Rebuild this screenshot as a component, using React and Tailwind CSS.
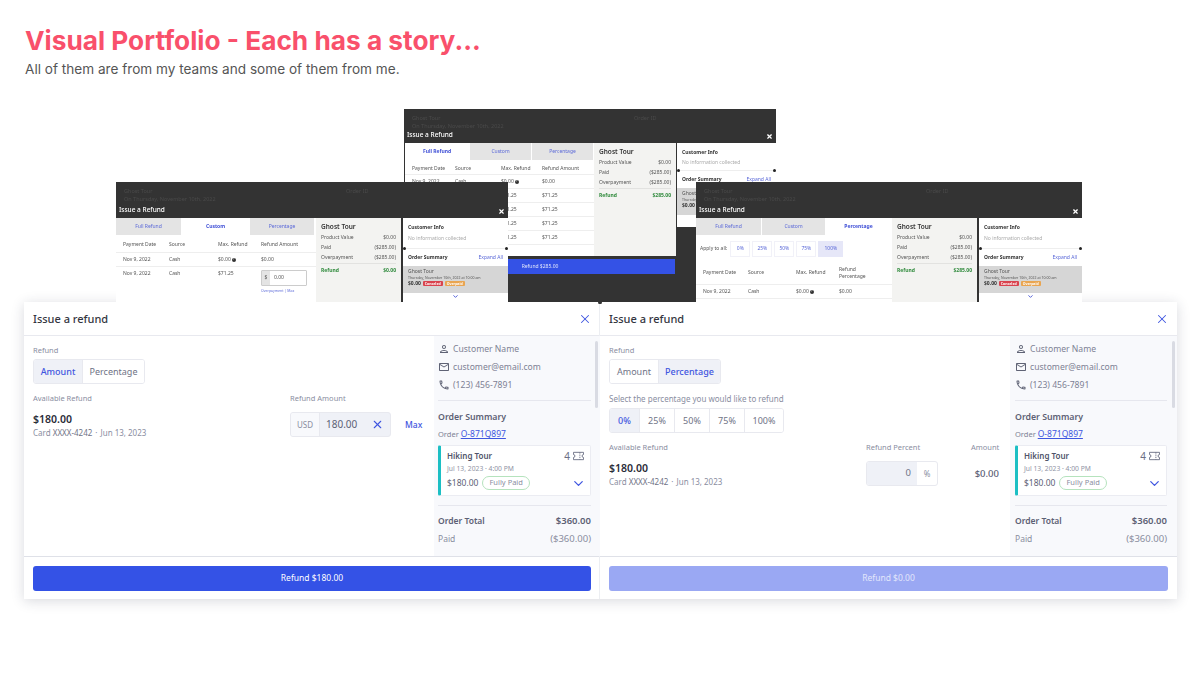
import { X, ChevronDown } from 'lucide-react';
import { MdOutlinePerson, MdOutlineMailOutline, MdOutlineCall } from 'react-icons/md';

function TicketIcon() {
  return (
    <svg width="11" height="10" viewBox="0 0 12 10" fill="none" stroke="#6b7084" strokeWidth="1">
      <path d="M.5 1h11v2.4a1.6 1.6 0 0 0 0 3.2V9H.5V6.6a1.6 1.6 0 0 0 0-3.2z" />
      <path d="M7.5 1v8" strokeDasharray="1.4 1" />
    </svg>
  );
}

function SidePanel({ wide }) {
  return (
    <div className={`relative h-full bg-[#f8f9fc] pt-[6px] text-[#6f7386] overflow-hidden ${wide ? 'w-[167px] pl-[5px] pr-[10px]' : 'w-[166px] pl-1 pr-[9px]'}`}>
      <div className="absolute right-[2px] top-[5px] w-[3px] h-[67px] rounded bg-[#d9dbe3]" />
      <div className="flex flex-col gap-[4px] text-[8.6px] leading-[14px] text-[#7d8194]">
        <div className="flex items-center gap-[3px]"><MdOutlinePerson size={12} color="#5f6375" />Customer Name</div>
        <div className="flex items-center gap-[3px]"><MdOutlineMailOutline size={12} color="#5f6375" />customer@email.com</div>
        <div className="flex items-center gap-[3px]"><MdOutlineCall size={12} color="#5f6375" />(123) 456-7891</div>
      </div>
      <div className="mt-[8px] border-t border-[#e6e7ee]" />
      <div className="mt-[9px] text-[8.75px] leading-[14px] font-semibold text-[#5d6175]">Order Summary</div>
      <div className="mt-[4px] text-[7.5px] leading-[12px] text-[#7d8194]">
        Order <span className="text-[#3f56e0] underline text-[8.5px]">O-871Q897</span>
      </div>
      <div className="mt-[5px] h-[51px] rounded-[2px] bg-white border border-[#ebecf2] border-l-[3px] border-l-[#1cbfc4] pl-[6px] pr-[6px] pt-[3px]">
        <div className="flex justify-between items-center text-[8px] leading-[14px] font-semibold text-[#50546a]">
          Hiking Tour
          <span className="flex items-center gap-[3px] text-[10px] font-normal text-[#6b7084]">4 <TicketIcon /></span>
        </div>
        <div className="text-[6.75px] leading-[12px] text-[#9094a5]">Jul 13, 2023 · 4:00 PM</div>
        <div className="mt-[1px] flex items-center text-[8.5px] text-[#5d6175]">
          $180.00
          <span className="ml-[4px] px-[6px] h-[14px] flex items-center rounded-full border border-[#b5e3bd] text-[7.5px] text-[#8a8e9f]">Fully Paid</span>
          <ChevronDown size={15} strokeWidth={2} color="#3f56e0" className="ml-auto -mr-[2px] -my-[1px]" />
        </div>
      </div>
      <div className="mt-[9px] border-t border-[#e6e7ee]" />
      <div className="mt-[8px] flex justify-between items-center text-[9.5px] leading-[14px] font-semibold text-[#5d6175]">
        <span className="text-[8.5px]">Order Total</span><span>$360.00</span>
      </div>
      <div className="mt-[4px] flex justify-between items-center text-[9.5px] leading-[14px] text-[#8a8e9f]">
        <span className="text-[8.5px]">Paid</span><span>($360.00)</span>
      </div>
    </div>
  );
}

function Segmented({ items, active, widths }) {
  return (
    <div className="flex h-[25px] w-fit rounded-[3px] border border-[#e8e9ef] overflow-hidden text-[9px]">
      {items.map((t, i) => (
        <div
          key={t}
          style={{ width: widths[i] }}
          className={`flex items-center justify-center ${i > 0 ? 'border-l border-[#e8e9ef]' : ''} ${t === active ? 'bg-[#eff1f7] text-[#3f56e0] font-medium' : 'bg-white text-[#6f7386]'}`}
        >
          {t}
        </div>
      ))}
    </div>
  );
}

function Available() {
  return (
    <div>
      <div className="text-[7.5px] leading-[12px] text-[#8a8e9f]">Available Refund</div>
      <div className="mt-[8px] text-[10.5px] leading-[14px] font-semibold text-[#2a2c38]">$180.00</div>
      <div className="mt-[1px] text-[8px] leading-[12px] text-[#8a8e9f]">
        Card <span className="text-[#6f7386]">XXXX-4242</span><span className="mx-[3px]">·</span>Jun 13, 2023
      </div>
    </div>
  );
}

function AmountBody() {
  return (
    <div className="flex justify-between">
      <Available />
      <div className="flex">
        <div className="w-[115px]">
          <div className="text-[7.5px] leading-[12px] text-[#8a8e9f]">Refund Amount</div>
          <div className="mt-[8px] flex items-center w-[101px] h-[25px] rounded-[3px] border border-[#e8e9ef] bg-[#eff1f7] overflow-hidden">
            <div className="w-[29px] h-full bg-[#f8f9fc] border-r border-[#e8e9ef] flex items-center justify-center text-[8px] text-[#8a8e9f]">USD</div>
            <div className="pl-[6px] text-[10px] text-[#5d6175]">180.00</div>
            <X size={13} strokeWidth={2} color="#3f56e0" className="ml-auto mr-[6px]" />
          </div>
        </div>
        <div className="w-[29px] pt-[27px] pr-[13px] text-[8.5px] font-medium text-[#3f56e0] text-right leading-[12px]">Max</div>
      </div>
    </div>
  );
}

function PercentBody() {
  return (
    <div>
      <div className="mb-[3px] text-[8px] leading-[12px] text-[#8a8e9f]">Select the percentage you would like to refund</div>
      <Segmented items={['0%', '25%', '50%', '75%', '100%']} active="0%" widths={[29, 35, 35, 35, 39]} />
      <div className="mt-[8px] flex justify-between pr-[11px]">
        <Available />
        <div className="flex gap-[33px]">
          <div>
            <div className="text-[7.5px] leading-[12px] text-[#8a8e9f]">Refund Percent</div>
            <div className="mt-[8px] flex w-[72px] h-[25px] rounded-[3px] border border-[#e8e9ef] overflow-hidden">
              <div className="w-[50px] bg-[#eff1f7] flex items-center justify-end pr-[6px] text-[9.5px] text-[#6f7386]">0</div>
              <div className="flex-1 flex items-center justify-center text-[8px] text-[#8a8e9f]">%</div>
            </div>
          </div>
          <div className="w-[28px] text-right">
            <div className="text-[7.5px] leading-[12px] text-[#8a8e9f]">Amount</div>
            <div className="mt-[14px] text-[9.5px] leading-[14px] font-medium text-[#5d6175]">$0.00</div>
          </div>
        </div>
      </div>
    </div>
  );
}

function RefundCard({ mode }) {
  const isAmount = mode === 'amount';
  return (
    <div className={`h-[297px] bg-white flex flex-col ${isAmount ? 'w-[576px]' : 'w-[577px] shadow-[-1px_0_0_#eceef2]'}`}>
      <div className="h-[34px] pl-[9px] pr-[8px] pt-[1px] flex items-center justify-between border-b border-[#e8e9ef]">
        <span className="text-[11px] font-medium text-[#34363f]">Issue a refund</span>
        <X size={14} strokeWidth={1.75} color="#3f56e0" />
      </div>
      <div className="h-[220px] flex">
        <div className="flex-1 pl-[9px] pt-[8px]">
          <div className="mb-[3px] text-[7.5px] leading-[12px] text-[#8a8e9f]">Refund</div>
          <Segmented items={['Amount', 'Percentage']} active={isAmount ? 'Amount' : 'Percentage'} widths={[48, 62]} />
          <div className={isAmount ? 'mt-[8px]' : 'mt-[9px]'}>
            {isAmount ? <AmountBody /> : <PercentBody />}
          </div>
        </div>
        <SidePanel wide={!isAmount} />
      </div>
      <div className="flex-1 px-[9px] flex items-center border-t border-[#dfe1e8]">
        <div className={`w-full h-[25px] rounded-[3px] flex items-center justify-center text-[8.5px] ${isAmount ? 'bg-[#3452e6] text-white' : 'bg-[#9aa8f3] text-[#e2e6fb]'}`}>
          {isAmount ? 'Refund $180.00' : 'Refund $0.00'}
        </div>
      </div>
    </div>
  );
}

function OldRow({ cols, grid, className = '' }) {
  return (
    <div className={`grid ${grid} items-center px-[7px] border-b border-[#eeeeee] text-[5px] leading-[7px] text-[#555] ${className}`}>
      {cols.map((c, i) => <span key={i}>{c}</span>)}
    </div>
  );
}

function Help() {
  return (
    <span className="inline-flex ml-[1px] w-[4px] h-[4px] rounded-full bg-[#333] text-white text-[3px] items-center justify-center align-middle">?</span>
  );
}

function OldTabs({ active, widths }) {
  return (
    <div className="flex h-[17px] text-[5px] text-[#5a68d8]">
      {['Full Refund', 'Custom', 'Percentage'].map((t, i) => (
        <div
          key={t}
          style={{ width: widths[i] }}
          className={`flex items-center justify-center mr-[1px] ${t === active ? 'bg-white font-bold text-[#3f4fd6]' : 'bg-[#e4e4e4]'}`}
        >
          {t}
        </div>
      ))}
    </div>
  );
}

function OldSummary({ refund, width }) {
  return (
    <div style={{ width }} className="shrink-0 h-full bg-[#f3f3f1] px-[5px] pt-[4px] text-[5px] text-[#555]">
      <div className="text-[6.5px] font-semibold text-[#333] mb-[1px] leading-[9px]">Ghost Tour</div>
      <div className="flex justify-between leading-[10px]"><span>Product Value</span><span>$0.00</span></div>
      <div className="flex justify-between leading-[10px]"><span>Paid</span><span>($285.00)</span></div>
      <div className="flex justify-between leading-[10px]"><span>Overpayment</span><span>($285.00)</span></div>
      <div className="mt-[1px] pt-[2px] border-t border-[#e2e2e0] flex justify-between font-bold text-[#2f8a3c] leading-[9px]"><span>Refund</span><span>{refund}</span></div>
    </div>
  );
}

function OldSide({ width, tall }) {
  return (
    <div style={{ width }} className="shrink-0 h-[84px] bg-white text-[5px] text-[#333]">
      <div className="px-[5px] pt-[4px] font-bold leading-[10px]">Customer Info</div>
      <div className={`relative px-[5px] text-[#aaa] border-b border-[#eeeeee] ${tall ? 'leading-[12px] pb-[4px]' : 'leading-[10px] pb-[3px]'}`}>
        No information collected
        <span className="absolute left-0 -bottom-[2px] w-[3px] h-[3px] rounded-full bg-[#222]" />
        <span className="absolute right-0 -bottom-[2px] w-[3px] h-[3px] rounded-full bg-[#222]" />
      </div>
      <div className="px-[5px] py-[4px] flex justify-between font-bold leading-[9px]">Order Summary<span className="font-normal text-[#5a68d8]">Expand All</span></div>
      <div className="bg-[#d6d6d6] px-[5px] pt-[2px] h-[27px] leading-[7px] text-[#555]">
        Ghost Tour
        <div className="text-[3.5px] leading-[5px]">Thursday, November 10th, 2022 at 10:00 am</div>
        <div className="flex items-center gap-[2px] font-bold text-[#333]">
          $0.00
          <span className="bg-[#d9434e] text-white text-[3.5px] px-[2px] leading-[5px] rounded-[1px]">Canceled</span>
          <span className="bg-[#e9a551] text-white text-[3.5px] px-[2px] leading-[5px] rounded-[1px]">Overpaid</span>
        </div>
      </div>
      <div className="flex justify-center"><ChevronDown size={7} strokeWidth={3} color="#3f4fd6" /></div>
    </div>
  );
}

function OldHeader({ tall }) {
  return (
    <div className={`relative text-[5.5px] ${tall ? 'h-[36px]' : 'h-[34px]'}`}>
      <div className="absolute left-[8px] top-[5px] text-[#4a4a4a] leading-[8px]">
        Ghost Tour
        <div>On Thursday, November 10th, 2022</div>
      </div>
      <div className="absolute left-[230px] top-[5px] text-[#4a4a4a] leading-[8px]">Order ID</div>
      <div className="absolute left-[3px] bottom-[3px] text-[6.5px] font-medium text-white">Issue a Refund</div>
      <X size={7} strokeWidth={4} color="#fff" className="absolute right-[3px] bottom-[3px]" />
    </div>
  );
}

function OldMiddle() {
  const grid = 'grid-cols-[43px_46px_41px_1fr]';
  return (
    <div className="absolute left-[404px] top-0 w-[372px] h-[193px] bg-[#333333] overflow-hidden blur-[0.3px]">
      <OldHeader />
      <div className="flex h-[159px] pl-[1px]">
        <div className="w-[270px] shrink-0">
          <div className="flex h-[113px] bg-white">
            <div className="flex-1">
              <OldTabs active="Full Refund" widths={[64, 61, 61]} />
              <OldRow grid={grid} cols={['Payment Date', 'Source', 'Max. Refund', 'Refund Amount']} className="h-[15px] pt-[3px]" />
              {['$0.00', '$71.25', '$71.25', '$71.25', '$71.25'].map((m, i) => (
                <OldRow key={i} grid={grid} cols={['Nov 9, 2022', 'Cash', i === 0 ? <>{m}<Help /></> : m, i === 0 ? '$0.00' : '$71.25']} className="h-[14px]" />
              ))}
            </div>
            <OldSummary refund="$285.00" width={82} />
          </div>
          <div className="mt-[3px] h-[15px] bg-[#3452e6] flex items-center justify-center text-[5px] text-[#dfe4fb]">Refund $285.00</div>
        </div>
        <div className="ml-[2px]"><OldSide width={99} /></div>
      </div>
    </div>
  );
}

function OldCustom() {
  const grid = 'grid-cols-[46px_49px_43px_1fr]';
  return (
    <div className="absolute left-[116px] top-[73px] w-[392px] h-[120px] bg-[#333333] overflow-hidden blur-[0.3px]">
      <OldHeader tall />
      <div className="flex h-[84px]">
        <div className="flex w-[285px] bg-white">
          <div className="flex-1">
            <OldTabs active="Custom" widths={[65, 67, 64]} />
            <OldRow grid={grid} cols={['Payment Date', 'Source', 'Max. Refund', 'Refund Amount']} className="h-[18px] pt-[2px]" />
            <OldRow grid={grid} cols={['Nov 9, 2022', 'Cash', <>$0.00<Help /></>, '$0.00']} className="h-[14px]" />
            <div className={`grid ${grid} px-[7px] pt-[3px] text-[5px] text-[#555]`}>
              <span>Nov 9, 2022</span><span>Cash</span><span>$71.25</span>
              <div>
                <div className="flex h-[16px] w-[46px] border border-[#cccccc] rounded-[1px]">
                  <span className="w-[8px] bg-[#e4e4e4] flex items-center justify-center">$</span>
                  <span className="pl-[4px] flex items-center">0.00</span>
                </div>
                <div className="mt-[2px] text-[3.5px] text-[#5a68d8]">Overpayment | Max</div>
              </div>
            </div>
          </div>
          <OldSummary refund="$0.00" width={85} />
        </div>
        <div className="ml-[2px]"><OldSide width={105} tall /></div>
      </div>
    </div>
  );
}

function OldPercent() {
  const grid = 'grid-cols-[45px_48px_43px_1fr]';
  return (
    <div className="absolute left-[696px] top-[73px] w-[386px] h-[120px] bg-[#333333] overflow-hidden blur-[0.3px]">
      <OldHeader tall />
      <div className="flex h-[84px]">
        <div className="flex w-[281px] bg-white">
          <div className="flex-1">
            <OldTabs active="Percentage" widths={[65, 63, 65]} />
            <div className="mt-[5px] flex items-center h-[18px] pl-[4px] text-[5px] text-[#555]">
              <span className="mr-[3px]">Apply to all:</span>
              {['0%', '25%', '50%', '75%'].map((p) => (
                <span key={p} className="w-[20px] h-[16px] flex items-center justify-center border border-[#f1f1f8] text-[#5a68d8] mr-[2px]">{p}</span>
              ))}
              <span className="w-[25px] h-[16px] flex items-center justify-center bg-[#e6e7f8] text-[#5a68d8]">100%</span>
            </div>
            <OldRow grid={grid} cols={['Payment Date', 'Source', 'Max. Refund', <>Refund<br />Percentage</>]} className="h-[24px] mt-[3px]" />
            <OldRow grid={grid} cols={['Nov 9, 2022', 'Cash', <>$0.00<Help /></>, '$0.00']} className="h-[14px]" />
          </div>
          <OldSummary refund="$285.00" width={85} />
        </div>
        <div className="ml-[2px]"><OldSide width={103} tall /></div>
      </div>
    </div>
  );
}

export default function App() {
  return (
    <div className="w-[1200px] h-[675px] bg-white overflow-hidden font-['Noto_Sans',sans-serif]">
      <div className="pl-[25px] pt-[24px] h-[109px] font-['Inter',sans-serif]">
        <h1 className="text-[26.25px] leading-[33px] font-bold text-[#f9506b]">Visual Portfolio - Each has a story...</h1>
        <p className="mt-[3px] text-[13.6px] leading-[18px] text-[#555555]">All of them are from my teams and some of them from me.</p>
      </div>
      <div className="relative h-[193px]">
        <OldMiddle />
        <OldCustom />
        <OldPercent />
        <div className="absolute left-[598px] -bottom-[2px] z-10 w-[4px] h-[3px] rounded-full bg-[#333333]" />
      </div>
      <div className="ml-[24px] flex w-fit shadow-[0_2px_12px_rgba(40,44,70,0.18)]">
        <RefundCard mode="amount" />
        <RefundCard mode="percent" />
      </div>
    </div>
  );
}
